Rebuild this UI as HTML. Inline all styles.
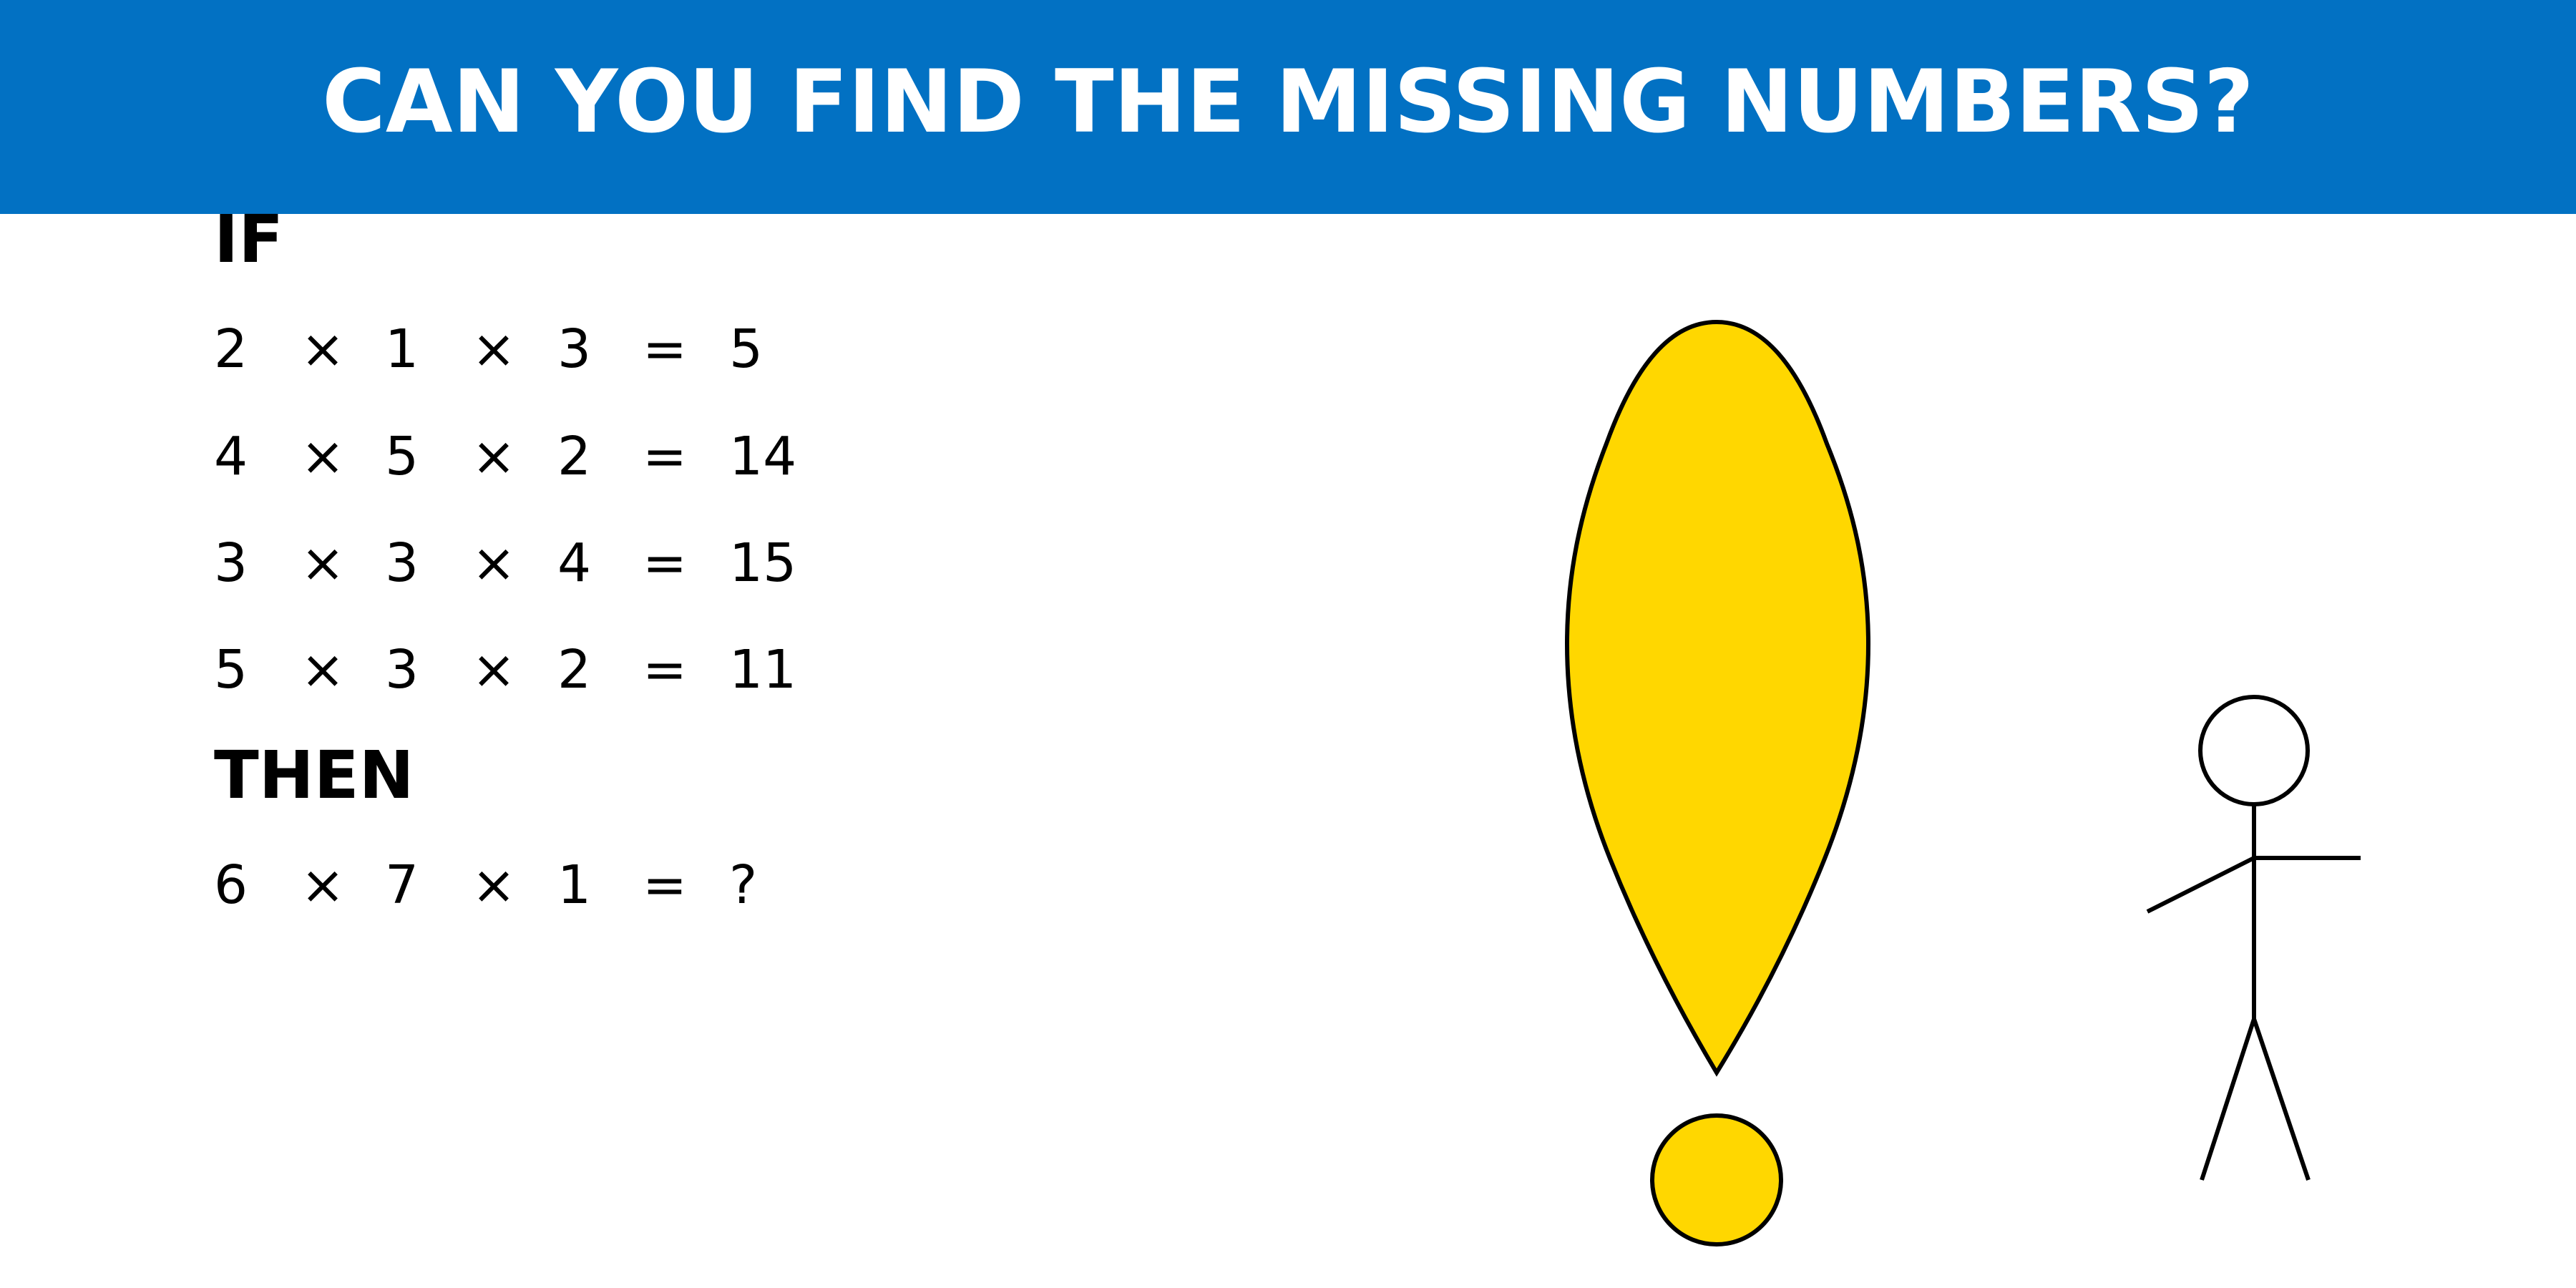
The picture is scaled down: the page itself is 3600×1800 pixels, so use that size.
<!DOCTYPE html>
<html><head><style>
html,body{margin:0;padding:0;width:3600px;height:1800px;background:#fff;overflow:hidden;position:relative;font-family:"DejaVu Sans","Liberation Sans",sans-serif}
.hdr{position:absolute;left:0;top:0;width:3600px;height:299px;background:#0271C3}
</style></head><body>
<div class="hdr"></div>
<svg width="3600" height="1800" style="position:absolute;left:0;top:0">
<text x="1800" y="184" text-anchor="middle" font-family="DejaVu Sans, sans-serif" font-weight="bold" font-size="121" fill="#fff">CAN YOU FIND THE MISSING NUMBERS?</text>
<g font-family="DejaVu Sans, sans-serif" font-weight="bold" font-size="92" fill="#000">
<text x="299" y="366">IF</text>
<text x="299" y="1115">THEN</text>
</g>
<g font-family="DejaVu Sans, sans-serif" font-size="74" fill="#000">
<text x="299" y="513">2</text><text x="420" y="513">×</text><text x="538" y="513">1</text><text x="659" y="513">×</text><text x="779" y="513">3</text><text x="898" y="513">=</text><text x="1019" y="513">5</text>
<text x="299" y="663">4</text><text x="420" y="663">×</text><text x="538" y="663">5</text><text x="659" y="663">×</text><text x="779" y="663">2</text><text x="898" y="663">=</text><text x="1019" y="663">14</text>
<text x="299" y="812">3</text><text x="420" y="812">×</text><text x="538" y="812">3</text><text x="659" y="812">×</text><text x="779" y="812">4</text><text x="898" y="812">=</text><text x="1019" y="812">15</text>
<text x="299" y="961">5</text><text x="420" y="961">×</text><text x="538" y="961">3</text><text x="659" y="961">×</text><text x="779" y="961">2</text><text x="898" y="961">=</text><text x="1019" y="961">11</text>
<text x="299" y="1262">6</text><text x="420" y="1262">×</text><text x="538" y="1262">7</text><text x="659" y="1262">×</text><text x="779" y="1262">1</text><text x="898" y="1262">=</text><text x="1019" y="1262">?</text>
</g>
<path d="M2399 1499 C2340 1400 2290 1300 2250 1200 C2210 1100 2190 1000 2190 900 C2190 800 2210 710 2245 620 C2285 510 2335 450 2399 450 C2463 450 2513 510 2553 620 C2590 710 2611 800 2611 900 C2611 1000 2590 1100 2550 1200 C2510 1300 2460 1400 2399 1499 Z" fill="#FFD700" stroke="#000" stroke-width="6"/>
<circle cx="2399" cy="1649" r="90" fill="#FFD700" stroke="#000" stroke-width="6"/>
<g stroke="#000" stroke-width="6" fill="none">
<circle cx="3150" cy="1049" r="75" fill="#fff"/>
<line x1="3150" y1="1124" x2="3150" y2="1424"/>
<line x1="3150" y1="1199" x2="3299" y2="1199"/>
<line x1="3150" y1="1199" x2="3001" y2="1274"/>
<line x1="3150" y1="1424" x2="3077" y2="1649"/>
<line x1="3150" y1="1424" x2="3226" y2="1649"/>
</g>
</svg>
</body></html>
